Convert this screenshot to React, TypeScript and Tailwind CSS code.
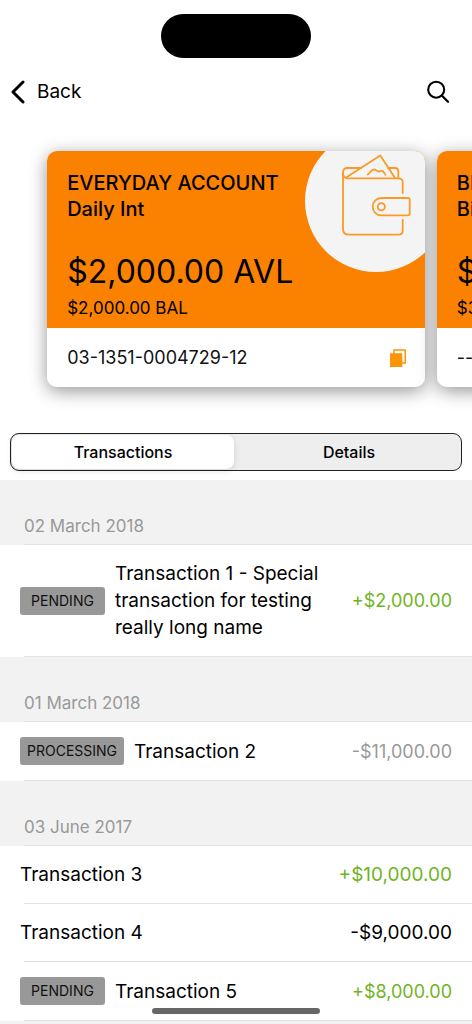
import { useState } from "react";

type Account = {
  name: string;
  product: string;
  available: string;
  balance: string;
  number: string;
};

type Transaction = {
  name: string;
  amount: string;
  status?: "PENDING" | "PROCESSING";
  tone: "credit" | "debit" | "muted";
};

const accounts: Account[] = [
  {
    name: "EVERYDAY ACCOUNT",
    product: "Daily Int",
    available: "$2,000.00 AVL",
    balance: "$2,000.00 BAL",
    number: "03-1351-0004729-12",
  },
  {
    name: "BILLS",
    product: "Bills",
    available: "$3,000.00 AVL",
    balance: "$3,000.00 BAL",
    number: "--",
  },
];

const groups: { date: string; items: Transaction[] }[] = [
  {
    date: "02 March 2018",
    items: [
      {
        name: "Transaction 1 - Special transaction for testing really long name",
        amount: "+$2,000.00",
        status: "PENDING",
        tone: "credit",
      },
    ],
  },
  {
    date: "01 March 2018",
    items: [{ name: "Transaction 2", amount: "-$11,000.00", status: "PROCESSING", tone: "muted" }],
  },
  {
    date: "03 June 2017",
    items: [
      { name: "Transaction 3", amount: "+$10,000.00", tone: "credit" },
      { name: "Transaction 4", amount: "-$9,000.00", tone: "debit" },
      { name: "Transaction 5", amount: "+$8,000.00", status: "PENDING", tone: "credit" },
    ],
  },
];

const tones = {
  credit: "text-[#6fb41f]",
  debit: "text-black",
  muted: "text-[#999999]",
};

function WalletBadge() {
  return (
    <svg
      className="absolute -top-[21px] -right-[22px] size-[142px]"
      viewBox="0 0 142 142"
      fill="none"
      aria-hidden="true"
    >
      <circle cx="71" cy="71" r="71" fill="#f4f4f4" />
      <g stroke="#fb9a26" strokeWidth="1.8" strokeLinecap="round" strokeLinejoin="round">
        <path d="M56 38H42.5Q38 38 38 43V99Q38 104.7 44 104.7H93.5Q97.7 104.7 97.7 100.5V90" />
        <path d="M38 43Q38 48.3 43 48.3H93.5Q97.7 48.3 97.7 52.5V63" />
        <path d="M83 38H90Q93.3 38 93.3 41.5V48" />
        <path d="M41.5 47.3L75.3 25.5L90 48" />
        <path d="M62.7 44.5C65 43 66.5 39.5 69 39.3C71 39.3 71.5 41.5 73.5 41.5C75.5 41.5 77 40 78 41.3L80.5 44.7" />
        <path d="M76.3 68H103Q104.7 68 104.7 69.7V83.6Q104.7 85.3 103 85.3H76.3A8.65 8.65 0 0 1 76.3 68Z" />
        <circle cx="76.3" cy="76.7" r="3.6" />
      </g>
    </svg>
  );
}

function AccountCard({ account }: { account: Account }) {
  return (
    <article className="w-full shrink-0 rounded-[10px] shadow-[0_4px_18px_rgba(0,0,0,0.42)]">
      <div className="relative overflow-hidden rounded-t-[10px] bg-[#fa8200] px-5 pt-[19px] pb-2 text-black">
        <WalletBadge />
        <div className="relative whitespace-nowrap">
          <h2 className="text-xl leading-[26px] font-medium">{account.name}</h2>
          <p className="text-xl leading-[26px] font-medium">{account.product}</p>
          <p className="mt-[30px] text-[32px] leading-10">{account.available}</p>
          <p className="mt-1 text-[17px] leading-6">{account.balance}</p>
        </div>
      </div>
      <div className="flex h-[59px] items-center justify-between rounded-b-[10px] bg-white pr-[18px] pl-5">
        <span className="text-lg leading-6 text-[#111111]">{account.number}</span>
        <button type="button" aria-label="Copy account number">
          <svg className="size-[18px]" viewBox="0 0 18 18" fill="none" aria-hidden="true">
            <path d="M5 1H16.2V14H5Z" stroke="#fb9408" strokeWidth="1.5" />
            <path d="M1 4.2H13.3V18H1Z" fill="#fb9408" />
          </svg>
        </button>
      </div>
    </article>
  );
}

function TransactionRow({ item }: { item: Transaction }) {
  return (
    <li className="bg-white">
      <div className="flex items-center px-5 py-[15px]">
        {item.status && (
          <span className="mr-2.5 min-w-[85px] rounded-[3px] bg-[#989898] px-[7px] py-1 text-center text-sm leading-5 text-[#111111]">
            {item.status}
          </span>
        )}
        <span className="min-w-0 flex-1 text-[19px] leading-[27px] text-black">{item.name}</span>
        <span
          className={`ml-5 shrink-0 leading-[27px] ${item.status ? "text-lg" : "text-[19px]"} ${tones[item.tone]}`}
        >
          {item.amount}
        </span>
      </div>
      <div className="ml-6 h-px bg-[#e2e2e2]" />
    </li>
  );
}

export default function App() {
  const [tab, setTab] = useState("Transactions");

  return (
    <div className="min-h-screen bg-[#f2f2f2] font-['Inter',sans-serif] text-black">
      <div className="bg-white pb-[9px]">
        <div className="flex justify-center pt-3.5">
          <div className="h-11 w-[150px] rounded-full bg-black" />
        </div>

        <header className="flex h-[67px] items-center justify-between pr-[22px] pl-[10px]">
          <button type="button" className="flex items-center gap-3 text-[19px] leading-6">
            <svg className="h-6 w-[15px]" viewBox="0 0 15 24" fill="none" aria-hidden="true">
              <path
                d="M13 2L3 12L13 22"
                stroke="currentColor"
                strokeWidth="3"
                strokeLinecap="round"
                strokeLinejoin="round"
              />
            </svg>
            Back
          </button>
          <button type="button" aria-label="Search">
            <svg className="size-6" viewBox="0 0 24 24" fill="none" aria-hidden="true">
              <circle cx="10.2" cy="9.7" r="8" stroke="currentColor" strokeWidth="2.1" />
              <path d="M16 15.8L22 21.8" stroke="currentColor" strokeWidth="2.3" strokeLinecap="round" />
            </svg>
          </button>
        </header>

        <section
          aria-label="Accounts"
          className="flex gap-3 overflow-x-auto px-[10%] pt-[26px] pb-[46px] [scrollbar-width:none]"
        >
          {accounts.map((account) => (
            <AccountCard key={account.name} account={account} />
          ))}
        </section>

        <div className="mx-2.5 grid h-[38px] grid-cols-2 gap-1 rounded-[9px] border border-[#222222] bg-[#eeeeee] p-px">
          {["Transactions", "Details"].map((label) => (
            <button
              key={label}
              type="button"
              aria-pressed={tab === label}
              onClick={() => setTab(label)}
              className={`rounded-lg text-base leading-6 font-medium ${
                tab === label ? "bg-white shadow-[0_2px_6px_rgba(0,0,0,0.12)]" : ""
              }`}
            >
              {label}
            </button>
          ))}
        </div>
      </div>

      <main>
        {groups.map((group) => (
          <section key={group.date}>
            <h3 className="px-6 pt-[34px] pb-1.5 text-[17px] leading-6 text-[#999999]">{group.date}</h3>
            <div className="flex h-px">
              <div className="w-6" />
              <div className="flex-1 bg-[#e2e2e2]" />
            </div>
            <ul>
              {group.items.map((item) => (
                <TransactionRow key={item.name} item={item} />
              ))}
            </ul>
          </section>
        ))}
      </main>

      <div className="fixed bottom-[10px] left-1/2 h-1.5 w-[168px] -translate-x-1/2 rounded-full bg-[#666666]" />
    </div>
  );
}
